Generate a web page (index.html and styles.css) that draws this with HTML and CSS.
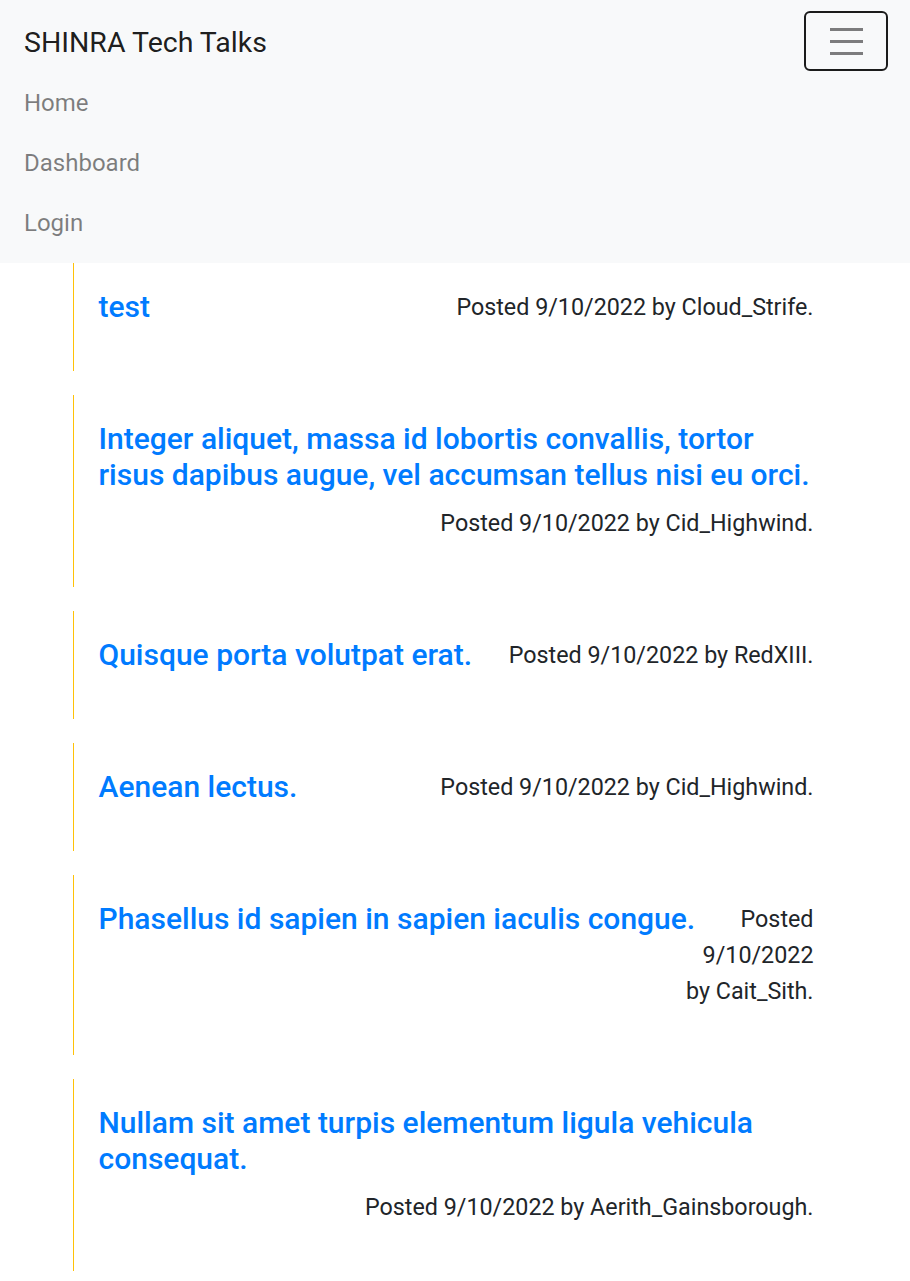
FILE: index.html
```html
<!DOCTYPE html>
<html lang="en">
<head>
<meta charset="utf-8">
<title>SHINRA Tech Talks</title>
<link rel="stylesheet" href="styles.css">
</head>
<body>
<nav class="navbar">
  <div class="navbar-top">
    <a class="brand" href="#">SHINRA Tech Talks</a>
    <button class="toggler" type="button" aria-label="Toggle navigation">
      <svg class="toggler-icon" viewBox="0 0 30 30" width="45" height="45" aria-hidden="true">
        <path d="M4 7h22M4 15h22M4 23h22" stroke="rgba(0,0,0,0.5)" stroke-width="2" stroke-linecap="butt" fill="none"/>
      </svg>
    </button>
  </div>
  <ul class="nav-list">
    <li><a class="nav-link" href="#">Home</a></li>
    <li><a class="nav-link" href="#">Dashboard</a></li>
    <li><a class="nav-link" href="#">Login</a></li>
  </ul>
</nav>

<main class="container">
  <article class="post">
    <div class="post-row">
      <h5 class="post-title"><a href="#">test</a></h5>
      <p class="post-meta">Posted 9/10/2022 by Cloud_Strife.</p>
    </div>
  </article>
  <article class="post">
    <div class="post-row">
      <h5 class="post-title"><a href="#">Integer aliquet, massa id lobortis convallis, tortor risus dapibus augue, vel accumsan tellus nisi eu orci.</a></h5>
      <p class="post-meta">Posted 9/10/2022 by Cid_Highwind.</p>
    </div>
  </article>
  <article class="post">
    <div class="post-row">
      <h5 class="post-title"><a href="#">Quisque porta volutpat erat.</a></h5>
      <p class="post-meta">Posted 9/10/2022 by RedXIII.</p>
    </div>
  </article>
  <article class="post">
    <div class="post-row">
      <h5 class="post-title"><a href="#">Aenean lectus.</a></h5>
      <p class="post-meta">Posted 9/10/2022 by Cid_Highwind.</p>
    </div>
  </article>
  <article class="post">
    <div class="post-row">
      <h5 class="post-title"><a href="#">Phasellus id sapien in sapien iaculis congue.</a></h5>
      <p class="post-meta">Posted 9/10/2022 by Cait_Sith.</p>
    </div>
  </article>
  <article class="post">
    <div class="post-row">
      <h5 class="post-title"><a href="#">Nullam sit amet turpis elementum ligula vehicula consequat.</a></h5>
      <p class="post-meta">Posted 9/10/2022 by Aerith_Gainsborough.</p>
    </div>
  </article>
</main>
</body>
</html>
```
FILE: styles.css
```css
* { box-sizing: border-box; }

html, body {
  margin: 0;
  padding: 0;
}

body {
  font-family: Roboto, "Liberation Sans", sans-serif;
  font-size: 24px;
  line-height: 36px;
  color: #212529;
  background: #fff;
}

a { text-decoration: none; }

/* Navbar */
.navbar {
  background: #f8f9fa;
  padding: 12px 22px 11px 24px;
}

.navbar-top {
  display: flex;
  align-items: center;
  justify-content: space-between;
}

.brand {
  display: inline-block;
  padding: 7.5px 0;
  font-size: 28.5px;
  line-height: 45px;
  color: rgba(0, 0, 0, 0.9);
}

.toggler {
  width: 84px;
  height: 60px;
  margin-top: -2px;
  padding: 0;
  display: flex;
  align-items: center;
  justify-content: center;
  background: transparent;
  border: 2px solid #1b1b1b;
  border-radius: 6px;
}

.toggler-icon { display: block; }

.nav-list {
  list-style: none;
  margin: 0;
  padding: 0;
}

.nav-link {
  display: block;
  padding: 12.5px 0 11.5px;
  font-size: 24px;
  line-height: 36px;
  color: rgba(0, 0, 0, 0.5);
}

/* Posts */
.container {
  width: 810px;
  max-width: 100%;
  margin: 0 auto;
  padding: 0 22.5px;
}

.post {
  border-left: 1px solid #ffc107;
  padding: 26px 24px 22px 25px;
  margin-bottom: 24px;
}

.post-row {
  display: flex;
  flex-wrap: wrap;
}

.post-title {
  flex: 0 0 auto;
  max-width: 100%;
  margin: 0 -12px 12px 0;
  font-size: 30px;
  font-weight: 500;
  line-height: 36px;
}

.post-title a { color: #007bff; }

.post-meta {
  flex: 1 1 0;
  margin: 0 0 24px;
  text-align: right;
  font-size: 23.3px;
  line-height: 36px;
  color: #212529;
}
```
